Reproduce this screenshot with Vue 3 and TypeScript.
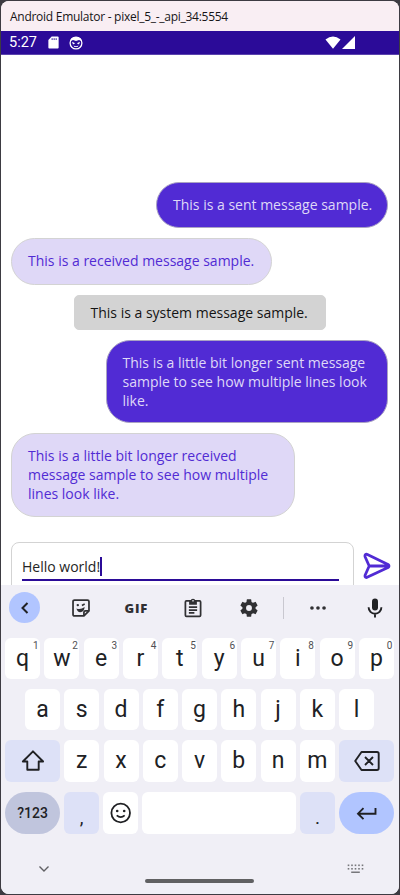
<script setup lang="ts">
interface Message {
  kind: 'sent' | 'received' | 'system'
  size: string
  text: string
}

interface LetterKey {
  label: string
  hint?: string
}

const messages: Message[] = [
  { kind: 'sent', size: 'short', text: 'This is a sent message sample.' },
  { kind: 'received', size: 'short', text: 'This is a received message sample.' },
  { kind: 'system', size: 'short', text: 'This is a system message sample.' },
  {
    kind: 'sent',
    size: 'long',
    text: 'This is a little bit longer sent message\nsample to see how multiple lines look\nlike.',
  },
  {
    kind: 'received',
    size: 'long',
    text: 'This is a little bit longer received\nmessage sample to see how multiple\nlines look like.',
  },
]

const topRow: LetterKey[] = 'qwertyuiop'.split('').map((label, i) => ({
  label,
  hint: String((i + 1) % 10),
}))
const homeRow: string[] = 'asdfghjkl'.split('')
const bottomRow: string[] = 'zxcvbnm'.split('')
const dots: number[] = [0, 1, 2, 3, 4]
</script>

<template>
  <div class="desktop">
    <div class="window">
      <header class="titlebar"><span class="title">Android Emulator - pixel_5_-_api_34:5554</span></header>

      <div class="status">
        <span class="clock">5:27</span>
        <svg class="sd" viewBox="0 0 12 14"><path d="M4 .5h6.600q1 0 1 1v11q0 1-1 1H1.400q-1 0-1-1V4.200Z" fill="#fff" /><path d="M4.500 2.300v2M6.700 2.300v2M8.900 2.300v2" stroke="#2b0b98" stroke-width="1" /></svg>
        <svg class="face" viewBox="0 0 14 14"><circle cx="7" cy="7" r="5.900" fill="none" stroke="#fff" stroke-width="1.300" /><path d="M1.500 5Q2 1 7 1t5.500 4L10 4 7 5 4 4Z" fill="#fff" /><path d="M3 5.800 6.200 7.200 4 8.500ZM11 5.800 7.800 7.200 10 8.500ZM4.500 9.500q2.500 1.500 5 0L8.500 11h-3Z" fill="#fff" /></svg>
        <span class="spacer"></span>
        <svg class="wifi" viewBox="0 0 16 13"><path d="M.5 3.400Q8-2.400 15.500 3.400L8 12.700Z" fill="#fff" /></svg>
        <svg class="signal" viewBox="0 0 13 13"><path d="M13 0v13H0Z" fill="#fff" /></svg>
      </div>

      <main class="chat">
        <div class="messages">
          <div v-for="(m, i) in messages" :key="i" class="bubble" :class="[m.kind, m.size]">
            <span class="words">{{ m.text }}</span>
          </div>
        </div>
        <div class="composer">
          <div class="entry">
            <div class="field"><span>Hello world!</span><i class="caret"></i></div>
          </div>
          <svg class="send" viewBox="0 0 28 28"><path d="M2.900 2.400Q1.500 3 2.200 5L6.200 14 2.200 23Q1.500 25.500 3.600 25.600L25 15.600Q27 14 25 12.400L4.400 2.500Q3.600 2.100 2.900 2.400ZM6.200 14H24.500" fill="none" stroke="#512bd4" stroke-width="2.800" stroke-linejoin="round" stroke-linecap="round" /></svg>
        </div>
      </main>

      <section class="keyboard">
        <div class="tools">
          <span class="tool back"><svg width="32" height="32" viewBox="0 0 32 32"><path d="m18.500 11-5 5 5 5" fill="none" stroke="#202124" stroke-width="2" /></svg></span>
          <svg class="tool" viewBox="0 0 24 24"><g fill="none" stroke="#303033" stroke-width="1.900" stroke-linejoin="round"><path d="M5 3.300h14q1.700 0 1.700 1.700V15.200l-5.500 5.500H5q-1.700 0-1.700-1.700V5Q3.300 3.300 5 3.300Z" /><path d="M15.200 20.500v-3.800q0-1.500 1.500-1.500h3.800" /></g><path d="M7 12.500q4.500 1.700 9-1.500-.5 5.500-4.800 5.500-3.200 0-4.200-4Z" fill="#303033" /><circle cx="8.500" cy="8.800" r="1.300" fill="#303033" /><path d="m13 9.300 3-1.600" stroke="#303033" stroke-width="1.700" /></svg>
          <span class="tool gif">GIF</span>
          <svg class="tool" viewBox="0 0 24 24"><g fill="none" stroke="#303033" stroke-width="1.900"><rect x="3.700" y="4.300" width="16.600" height="16.800" rx="1.200" /><path d="M7.500 11h9M7.500 14.200h9M7.500 17.400h6" /><path d="M8.700 5h6.600v2.500H8.700Z" fill="#303033" /></g><circle cx="12" cy="4.300" r="2.500" fill="#303033" /><circle cx="12" cy="4.200" r=".9" fill="#f0eff6" /></svg>
          <svg class="tool" viewBox="0 0 24 24"><path fill="#303033" d="M19.140 12.940c.04-.3.060-.61.060-.94s-.02-.64-.07-.94l2.030-1.580a.49.49 0 0 0 .12-.61l-1.920-3.320a.49.49 0 0 0-.59-.22l-2.390.96a7 7 0 0 0-1.620-.94l-.36-2.540a.48.48 0 0 0-.48-.41h-3.840a.47.47 0 0 0-.47.41l-.36 2.540a7.400 7.400 0 0 0-1.620.94l-2.390-.96a.48.48 0 0 0-.59.220L2.740 8.870a.47.47 0 0 0 .12.610l2.030 1.580c-.05.300-.09.630-.09.940s.02.640.070.940l-2.030 1.580a.49.49 0 0 0-.12.610l1.920 3.320c.12.220.370.290.590.220l2.390-.96c.5.380 1.030.700 1.620.940l.360 2.540c.05.240.240.410.480.410h3.840c.24 0 .44-.17.470-.41l.36-2.540a7.300 7.300 0 0 0 1.620-.94l2.390.96c.22.080.470 0 .590-.22l1.920-3.320a.47.47 0 0 0-.12-.61ZM12 15.200a3.200 3.200 0 1 1 0-6.400 3.200 3.200 0 0 1 0 6.400Z" /></svg>
          <i class="divider"></i>
          <svg class="tool more" viewBox="0 0 24 24"><g fill="#303033"><circle cx="5.400" cy="12" r="2" /><circle cx="12" cy="12" r="2" /><circle cx="18.600" cy="12" r="2" /></g></svg>
          <svg class="tool mic" viewBox="0 0 24 24"><rect x="9" y="2.500" width="6" height="12" rx="3" fill="#202124" /><path d="M5.600 11.300a6.400 6.400 0 0 0 12.800 0M12 17.700V21.500" fill="none" stroke="#202124" stroke-width="1.900" /></svg>
        </div>

        <div class="row">
          <div v-for="k in topRow" :key="k.label" class="key"><span>{{ k.label }}</span><sup>{{ k.hint }}</sup></div>
        </div>
        <div class="row home">
          <div v-for="k in homeRow" :key="k" class="key"><span>{{ k }}</span></div>
        </div>
        <div class="row">
          <div class="key wide tinted"><svg width="24" height="24" viewBox="0 0 24 24"><path d="M12 2.300 1.900 12.500h4.400v8.200h11.400v-8.200h4.400Z" fill="none" stroke="#202124" stroke-width="1.900" stroke-linejoin="round" /></svg></div>
          <div v-for="k in bottomRow" :key="k" class="key"><span>{{ k }}</span></div>
          <div class="key wide tinted"><svg width="28" height="24" viewBox="0 0 28 24"><path d="M8.500 3H24q1.700 0 1.700 1.700v14.600Q25.700 21 24 21H8.500L2.200 12ZM12 8l8 8M20 8l-8 8" fill="none" stroke="#202124" stroke-width="1.900" stroke-linejoin="round" /></svg></div>
        </div>
        <div class="row last">
          <div class="key wide symbols">?123</div>
          <div class="key tinted punct">,</div>
          <div class="key"><svg width="24" height="24" viewBox="0 0 24 24"><circle cx="11.700" cy="12" r="9.300" fill="none" stroke="#202124" stroke-width="1.800" /><circle cx="8.200" cy="10" r="1.300" fill="#202124" /><circle cx="15.200" cy="10" r="1.300" fill="#202124" /><path d="M7.700 14.400q4 3.400 8 0" fill="none" stroke="#202124" stroke-width="1.700" /></svg></div>
          <div class="key space"></div>
          <div class="key tinted punct">.</div>
          <div class="key wide enter"><svg width="24" height="24" viewBox="0 0 24 24"><path d="M20.500 7v5.700H3M8.500 7.200 3 12.700l5.500 5.500" fill="none" stroke="#202124" stroke-width="1.900" /></svg></div>
        </div>

        <footer class="nav">
          <svg class="hide" viewBox="0 0 12 12"><path d="m1.500 3.500 4.500 4.500 4.500-4.500" fill="none" stroke="#606064" stroke-width="1.400" /></svg>
          <i class="handle"></i>
          <svg class="switcher" viewBox="0 0 17 10"><g fill="#77777b"><g v-for="d in dots" :key="d"><rect :x="0.7 + d * 3.5" y=".5" width="1.600" height="1.600" /><rect :x="0.7 + d * 3.5" y="4" width="1.600" height="1.600" /></g><rect x="4.200" y="7.500" width="8.600" height="1.500" /></g></svg>
        </footer>
      </section>
    </div>
  </div>
</template>

<style>
body {
  margin: 0;
  background: #3d3b42;
}
</style>

<style scoped>
.desktop {
  box-sizing: border-box;
  width: 400px;
  height: 895px;
  padding: 1px;
  background: #3d3b42;
  font-family: 'Open Sans', sans-serif;
  overflow: hidden;
}
.window {
  display: flex;
  flex-direction: column;
  height: 893px;
  border-radius: 8px;
  overflow: hidden;
  background: #fff;
}
svg {
  display: block;
  flex: none;
}
.titlebar {
  height: 30px;
  display: flex;
  align-items: center;
  padding-left: 9px;
  background: #f9eef3;
  color: #171517;
  font-size: 12px;
  white-space: nowrap;
}
.title {
  letter-spacing: -0.270px;
}
.status {
  box-sizing: border-box;
  height: 24px;
  display: flex;
  align-items: center;
  padding: 0 44px 0 8px;
  background: #2b0b98;
  border-bottom: 1px solid #5b43ad;
  color: #fff;
}
.clock {
  width: 39px;
  font: 14.500px/20px Roboto, sans-serif;
}
.sd {
  width: 11px;
  height: 13px;
  margin-right: 10px;
}
.face {
  width: 14px;
  height: 14px;
}
.spacer {
  flex: 1;
}
.wifi {
  width: 16px;
  height: 13px;
  margin-right: 1px;
}
.signal {
  width: 13px;
  height: 13px;
}
.chat {
  height: 530px;
  flex: none;
  overflow: hidden;
}
.messages {
  height: 487px;
  box-sizing: border-box;
  padding: 127px 11px 0 10px;
  display: flex;
  flex-direction: column;
  gap: 10px;
}
.bubble {
  box-sizing: border-box;
  flex: none;
  border: 1.500px solid #d3d3d3;
  border-radius: 24px;
  padding: 12px 16px;
  font-size: 14px;
  line-height: 19.200px;
  white-space: pre;
}
.sent {
  align-self: flex-end;
  background: #512bd4;
  border-color: #aaa3c3;
  color: #dfd8f7;
}
.received {
  align-self: flex-start;
  background: #dfd8f7;
  color: #512bd4;
}
.system {
  align-self: center;
  width: 252px;
  height: 35px;
  padding: 7px 16px;
  border-radius: 5px;
  background: #d3d3d3;
  color: #141414;
}
.sent.short {
  width: 232px;
  height: 46px;
}
.received.short {
  width: 261px;
  height: 47px;
}
.long {
  width: 284px;
  height: 84px;
}
.sent.long {
  width: 282.500px;
  height: 83px;
}
.composer {
  display: flex;
  padding-left: 10px;
}
.entry {
  box-sizing: border-box;
  width: 342.500px;
  height: 54px;
  flex: none;
  border: 1px solid #d3d3d3;
  border-radius: 8px;
  padding: 10px 14px 0 10px;
}
.field {
  height: 26px;
  display: flex;
  align-items: center;
  border-bottom: 2px solid #2b0b98;
  color: #242424;
  font-size: 14px;
}
.caret {
  width: 2px;
  height: 19px;
  background: #2b0b98;
}
.send {
  width: 28px;
  height: 28px;
  margin: 10px 0 0 9px;
}
.keyboard {
  flex: 1;
  padding: 0 5px 0 4px;
  background: #f0eff6;
  color: #202124;
  font-family: Roboto, sans-serif;
}
.tools {
  height: 45px;
  margin-bottom: 8px;
  display: flex;
  align-items: center;
}
.tool {
  width: 22px;
  height: 22px;
  margin-left: 34px;
}
.tool.back {
  width: 31px;
  height: 31px;
  margin-left: 3.500px;
  border-radius: 50%;
  background: #b1c5ff;
}
.back + .tool {
  margin-left: 30px;
}
.tool.gif {
  width: 26px;
  height: auto;
  margin-left: 33px;
  font: 800 13px/22px 'Open Sans', sans-serif;
  letter-spacing: 0.8px;
  color: #303033;
}
.gif + .tool {
  margin-left: 31px;
}
.divider {
  width: 1px;
  height: 22px;
  margin-left: 23px;
  background: #c9c8d0;
}
.tool.more {
  margin-left: 23px;
}
.tool.mic {
  width: 24px;
  height: 24px;
}
.row {
  display: flex;
  justify-content: space-between;
  height: 41.200px;
  margin-bottom: 10px;
}
.row.home {
  padding: 0 20px;
}
.key {
  position: relative;
  box-sizing: border-box;
  width: 35px;
  height: 100%;
  flex: none;
  display: flex;
  align-items: center;
  justify-content: center;
  border-radius: 6px;
  background: #fff;
  font-size: 23px;
}
.key sup {
  position: absolute;
  top: 2px;
  right: 1.500px;
  font-size: 10px;
  line-height: 12px;
  color: #505054;
}
.wide {
  width: 55px;
}
.tinted {
  background: #dde1f7;
}
.symbols {
  border-radius: 21px;
  background: #c0c5dd;
  font-size: 14px;
  font-weight: 500;
}
.enter {
  border-radius: 21px;
  background: #b1c5ff;
}
.space {
  width: 154px;
}
.punct {
  padding-top: 10px;
  font-size: 19px;
}
.row.last {
  height: 42px;
}
.nav {
  display: flex;
  align-items: center;
  padding: 11px 30px 0 33px;
}
.hide {
  width: 12px;
  height: 12px;
}
.handle {
  width: 109px;
  height: 4px;
  margin: 24px auto 0 95px;
  border-radius: 2px;
  background: #606062;
}
.switcher {
  width: 17px;
  height: 10px;
}
</style>
